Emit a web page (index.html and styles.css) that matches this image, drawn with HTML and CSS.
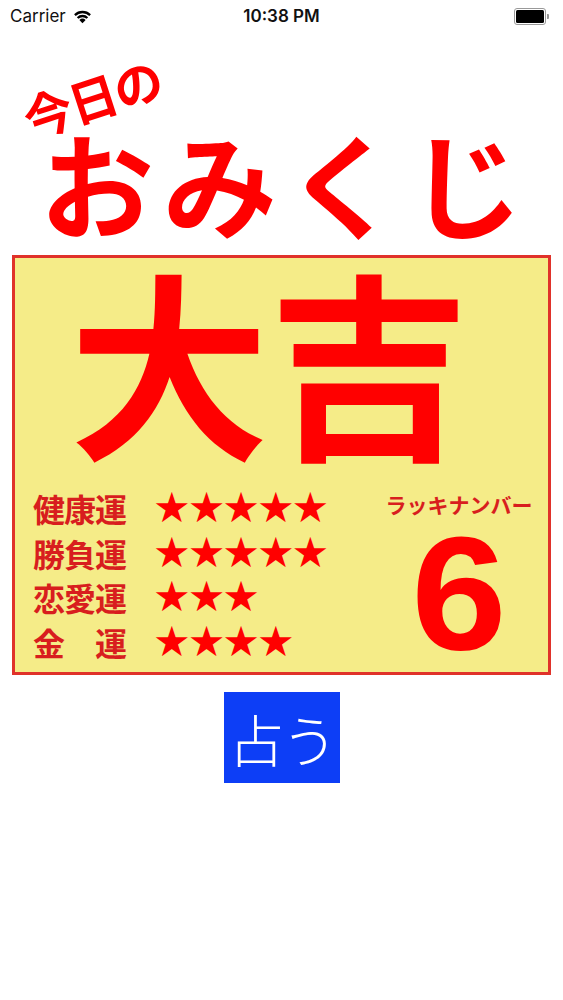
FILE: index.html
```html
<!DOCTYPE html>
<html lang="ja">
<head>
<meta charset="utf-8">
<link rel="stylesheet" href="styles.css">
</head>
<body>
<div class="status">
  <div class="carrier">Carrier
    <svg class="wifi" width="20" height="15" viewBox="0 0 20 15"><path d="M10 14.5 L7 11.2 A4.5 4.5 0 0 1 13 11.2 Z" fill="#000"/><path d="M4.6 8.6 A7.8 7.8 0 0 1 15.4 8.6 L13.9 10.2 A5.7 5.7 0 0 0 6.1 10.2 Z" fill="#000"/><path d="M2 5.8 A11.5 11.5 0 0 1 18 5.8 L16.5 7.4 A9.4 9.4 0 0 0 3.5 7.4 Z" fill="#000"/></svg>
  </div>
  <div class="time">10:38 PM</div>
  <div class="battery"><div class="batt-body"><div class="batt-fill"></div></div><div class="batt-tip"></div></div>
</div>
<div class="title">
  <div class="sub">今日の</div>
  <div class="main">おみくじ</div>
</div>
<div class="card">
  <div class="big">大吉</div>
  <div class="bottom">
    <div class="rows">
      <div class="row"><span class="label">健康運</span><span class="stars">★★★★★</span></div>
      <div class="row"><span class="label">勝負運</span><span class="stars">★★★★★</span></div>
      <div class="row"><span class="label">恋愛運</span><span class="stars">★★★</span></div>
      <div class="row"><span class="label">金　運</span><span class="stars">★★★★</span></div>
    </div>
    <div class="lucky">
      <div class="lucky-label">ラッキナンバー</div>
      <div class="lucky-num">6</div>
    </div>
  </div>
</div>
<div class="btn-wrap"><div class="btn">占う</div></div>
</body>
</html>
```
FILE: styles.css
```css
html, body { margin: 0; padding: 0; background: #fff; }
body { width: 563px; font-family: "Noto Sans CJK JP", "Noto Sans", sans-serif; }
.status { height: 32px; display: flex; align-items: center; justify-content: space-between; padding: 0 14px 0 10px; font-family: "Inter", "Liberation Sans", Arial, sans-serif; font-size: 17px; color: #111; position: relative; }
.carrier { display: flex; align-items: center; gap: 6px; }
.wifi { width: 21px; height: 16px; }
.time { position: absolute; left: 0; right: 0; text-align: center; font-size: 17px; font-weight: 600; pointer-events: none; }
.battery { display: flex; align-items: center; }
.batt-body { width: 28px; height: 13px; border: 1px solid #999; border-radius: 3px; padding: 1px; box-sizing: content-box; }
.batt-fill { width: 100%; height: 100%; background: #000; border-radius: 1.5px; }
.batt-tip { width: 2px; height: 5px; background: #999; border-radius: 0 1px 1px 0; margin-left: 1px; }
.title { color: #ff0000; height: 223px; padding-top: 1px; box-sizing: border-box; }
.sub { font-size: 49px; font-weight: 700; line-height: 1; margin: 60px 0 0 32px; transform: rotate(-18deg); transform-origin: left bottom; width: 155px; letter-spacing: -2px; }
.main { font-size: 114px; font-weight: 700; line-height: 1; margin: -18px 0 0 40px; letter-spacing: 9px; white-space: nowrap; }
.card { margin: 0 12px; height: 420px; box-sizing: border-box; border: 3px solid #e0322a; background: #f5ec88; }
.big { color: #ff0000; font-size: 200px; font-weight: 700; line-height: 1; margin: 0 0 0 54px; padding-top: 0; letter-spacing: 0; height: 228px; }
.bottom { display: flex; justify-content: space-between; padding: 0 14px 0 18px; }
.rows { display: flex; flex-direction: column; }
.row { display: flex; align-items: center; height: 44.5px; line-height: 1; }
.label { color: #d81e1e; font-size: 32px; font-weight: 700; width: 120px; letter-spacing: -1px; }
.stars { color: #ff0000; font-size: 42px; letter-spacing: -3px; font-family: "DejaVu Sans", sans-serif; }
.lucky { display: flex; flex-direction: column; align-items: center; width: 150px; }
.lucky-label { color: #d81e1e; font-size: 21px; font-weight: 700; margin-top: 6px; line-height: 1.2; }
.lucky-num { color: #ff0000; font-family: "Liberation Sans", Arial, sans-serif; font-weight: 700; font-size: 162px; line-height: 1; margin-top: -5px; transform: scaleX(1.06); }
.btn-wrap { display: flex; justify-content: center; margin-top: 17px; }
.btn { width: 116px; height: 91px; background: #0d3ef6; color: #fff; font-size: 56px; font-weight: 300; display: flex; align-items: center; justify-content: center; letter-spacing: -3px; }
```
